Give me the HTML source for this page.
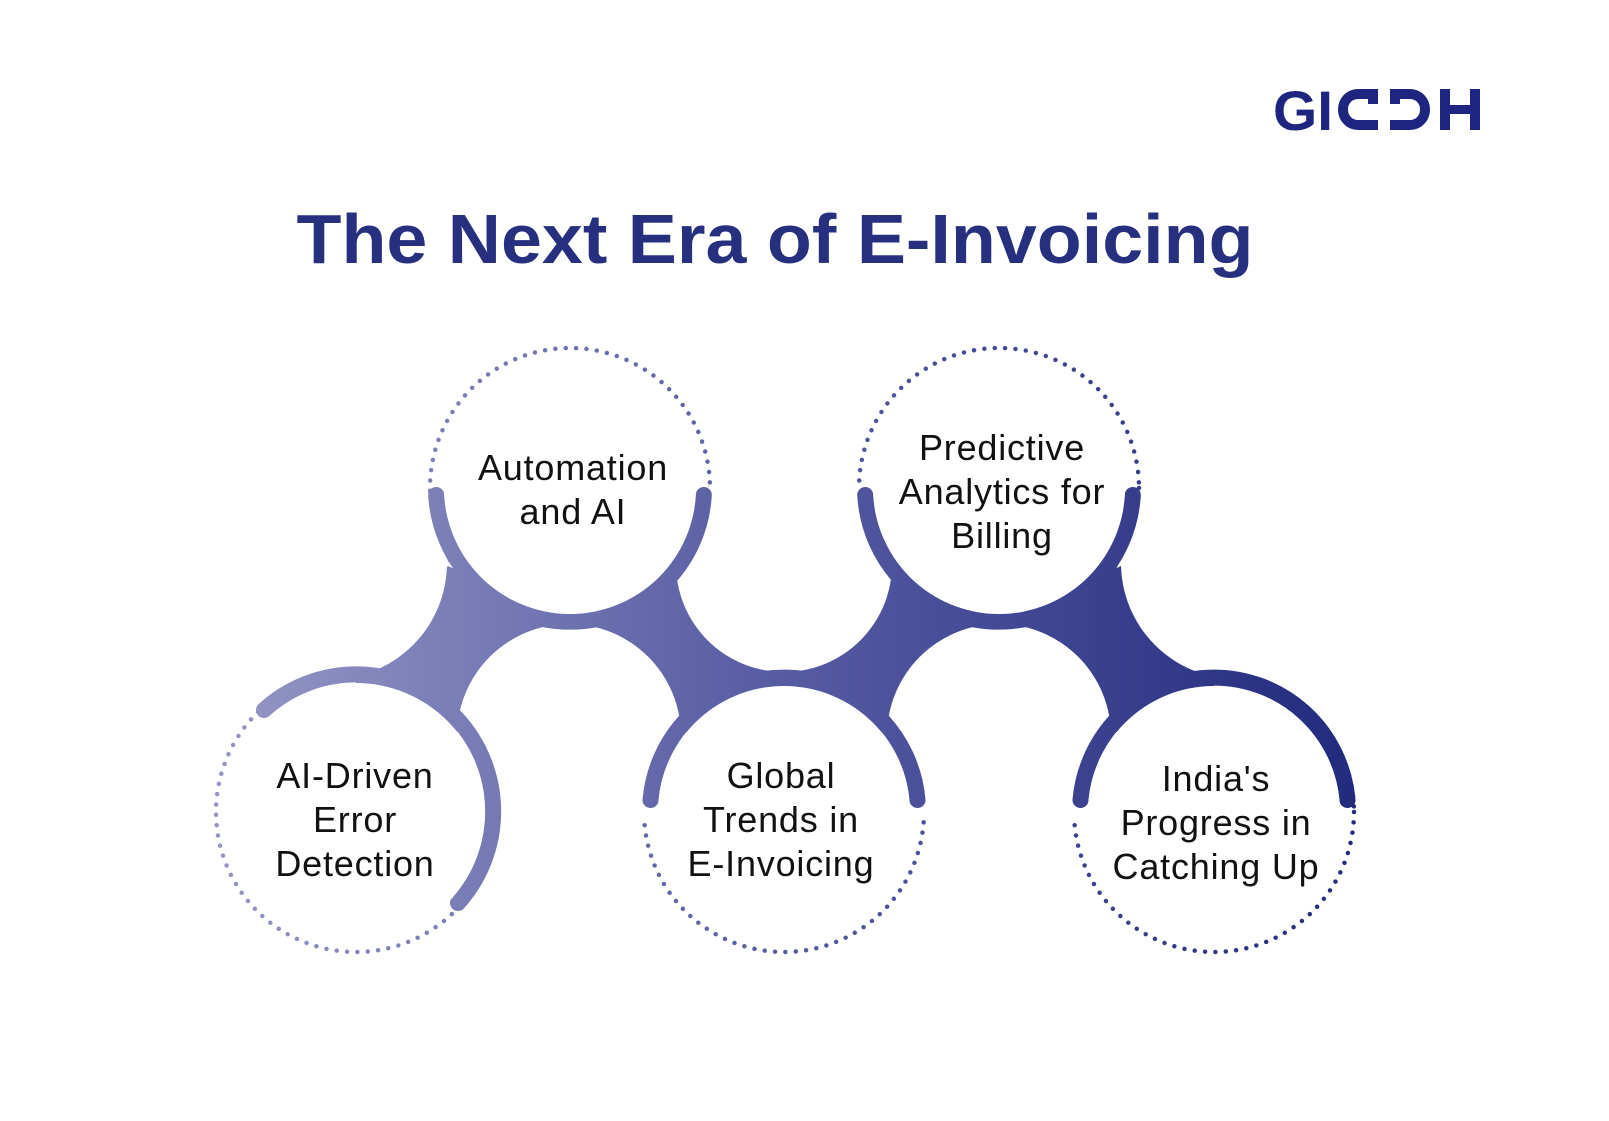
<!DOCTYPE html>
<html><head><meta charset="utf-8"><style>
html,body{margin:0;padding:0;background:#fff;overflow:hidden;width:1609px;height:1121px;}
svg{display:block;}
</style></head><body>
<svg width="1609" height="1121" viewBox="0 0 1609 1121" xmlns="http://www.w3.org/2000/svg">
<defs>
<linearGradient id="g" gradientUnits="userSpaceOnUse" x1="240" y1="0" x2="1360" y2="0">
<stop offset="0" stop-color="#9394c4"/>
<stop offset="0.45" stop-color="#5a5fa4"/>
<stop offset="1" stop-color="#222a7e"/>
</linearGradient>
</defs>

<g fill="none" stroke="url(#g)" stroke-width="4.5" stroke-linecap="round" stroke-dasharray="0 10.4">
<circle cx="356" cy="812" r="140"/>
<circle cx="570" cy="488" r="140"/>
<circle cx="784" cy="812" r="140"/>
<circle cx="999" cy="488" r="140"/>
<circle cx="1214" cy="812" r="140"/>
</g>

<polygon points="356,676 448,566 570,622 692,566 784,678 877,566 999,622 1121,566 1214,678 1214,732 356,732" fill="url(#g)"/>

<g fill="#fff">
<circle cx="331" cy="563" r="116"/>
<circle cx="1237" cy="563" r="116"/>
<circle cx="784" cy="564" r="108"/>
<circle cx="569" cy="736" r="112"/>
<circle cx="999" cy="736" r="112"/>
</g>

<g fill="none" stroke="url(#g)" stroke-width="16" stroke-linecap="round">
<path d="M264 710 A137 137 0 0 1 458 903"/>
<path d="M436.2 495 A134 134 0 0 0 703.8 495"/>
<path d="M650.5 800 A134 134 0 0 1 917.5 800"/>
<path d="M865.2 495 A134 134 0 0 0 1132.8 495"/>
<path d="M1080.5 800 A134 134 0 0 1 1347.5 800"/>
</g>

<g fill="#fff">
<circle cx="356" cy="812" r="129"/>
<circle cx="570" cy="488" r="126"/>
<circle cx="784" cy="812" r="126"/>
<circle cx="999" cy="488" r="126"/>
<circle cx="1214" cy="812" r="126"/>
</g>

<text x="775" y="263" text-anchor="middle" font-family="Liberation Sans, sans-serif" font-weight="bold" font-size="70" fill="#27307f" textLength="957" lengthAdjust="spacingAndGlyphs">The Next Era of E-Invoicing</text>

<g font-family="Liberation Sans, sans-serif" font-size="36" fill="#111" text-anchor="middle" letter-spacing="0.8">
<text x="355" y="788">AI-Driven</text>
<text x="355" y="832">Error</text>
<text x="355" y="876">Detection</text>
<text x="573" y="480">Automation</text>
<text x="573" y="524">and AI</text>
<text x="781" y="788">Global</text>
<text x="781" y="832">Trends in</text>
<text x="781" y="876">E-Invoicing</text>
<text x="1002" y="460">Predictive</text>
<text x="1002" y="504">Analytics for</text>
<text x="1002" y="548">Billing</text>
<text x="1216" y="791">India's</text>
<text x="1216" y="835">Progress in</text>
<text x="1216" y="879">Catching Up</text>
</g>

<g fill="#1e2580">
<text x="1273" y="130" font-family="Liberation Sans, sans-serif" font-weight="bold" font-size="56" textLength="60" lengthAdjust="spacingAndGlyphs">GI</text>
<path d="M1378 89 H1358 A20 20 0 0 0 1338 109 V110 A20 20 0 0 0 1358 130 H1378 V120 H1358 A10 10 0 0 1 1348 110 V109 A10 10 0 0 1 1358 99 H1368 V104 H1378 Z"/>
<path d="M1390 89 H1410 A20 20 0 0 1 1430 109 V110 A20 20 0 0 1 1410 130 H1390 V120 H1410 A10 10 0 0 0 1420 110 V109 A10 10 0 0 0 1410 99 H1400 V104 H1390 Z"/>
<path d="M1440 89 H1450 V105 H1470 V89 H1480 V130 H1470 V114 H1450 V130 H1440 Z"/>
</g>
</svg>
</body></html>
